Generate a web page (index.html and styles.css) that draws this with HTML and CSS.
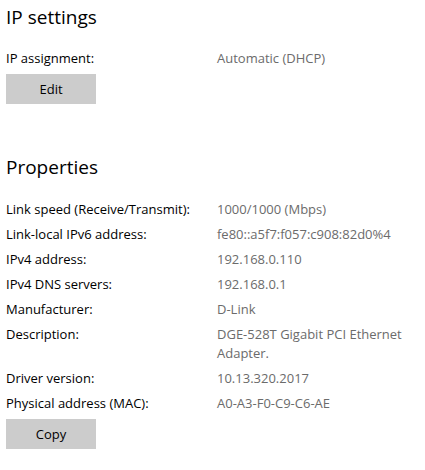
FILE: index.html
```html
<!DOCTYPE html>
<html lang="en">
<head>
    <meta charset="UTF-8">
    <meta name="viewport" content="width=device-width, initial-scale=1.0">
    <title>Network properties</title>
    <link rel="stylesheet" href="styles.css">
</head>
<body>
    <div class="page">
        <section class="group">
            <h2>IP settings</h2>
            <dl class="props">
                <dt>IP assignment:</dt>
                <dd>Automatic (DHCP)</dd>
            </dl>
            <button class="btn">Edit</button>
        </section>

        <section class="group">
            <h2>Properties</h2>
            <dl class="props props-wide">
                <dt>Link speed (Receive/Transmit):</dt>
                <dd>1000/1000 (Mbps)</dd>
                <dt>Link-local IPv6 address:</dt>
                <dd>fe80::a5f7:f057:c908:82d0%4</dd>
                <dt>IPv4 address:</dt>
                <dd>192.168.0.110</dd>
                <dt>IPv4 DNS servers:</dt>
                <dd>192.168.0.1</dd>
                <dt>Manufacturer:</dt>
                <dd>D-Link</dd>
                <dt>Description:</dt>
                <dd>DGE-528T Gigabit PCI Ethernet Adapter.</dd>
                <dt>Driver version:</dt>
                <dd>10.13.320.2017</dd>
                <dt>Physical address (MAC):</dt>
                <dd>A0-A3-F0-C9-C6-AE</dd>
            </dl>
            <button class="btn">Copy</button>
        </section>
    </div>
</body>
</html>
```

FILE: styles.css
```css
* {
    box-sizing: border-box;
}

body {
    margin: 0;
    background: #fff;
    font-family: 'Open Sans', 'Noto Sans', sans-serif;
    font-size: 13px;
    color: #000;
}

.page {
    padding: 0 6px;
}

.group + .group {
    margin-top: 46px;
}

h2 {
    margin: 0;
    padding-top: 3px;
    font-size: 19px;
    font-weight: 400;
    line-height: 28px;
}

.props {
    display: grid;
    grid-template-columns: 211px 1fr;
    row-gap: 6px;
    margin: 18px 0 0;
    line-height: 19px;
}

.props-wide {
    margin-top: 19px;
}

.props dt,
.props dd {
    margin: 0;
}

.props dd {
    color: #6b6b6b;
    padding-right: 8px;
}

.btn {
    display: block;
    width: 90px;
    height: 30px;
    margin-top: 6px;
    padding: 0;
    border: none;
    background: #cccccc;
    font-family: inherit;
    font-size: 13px;
    color: #000;
}
```
